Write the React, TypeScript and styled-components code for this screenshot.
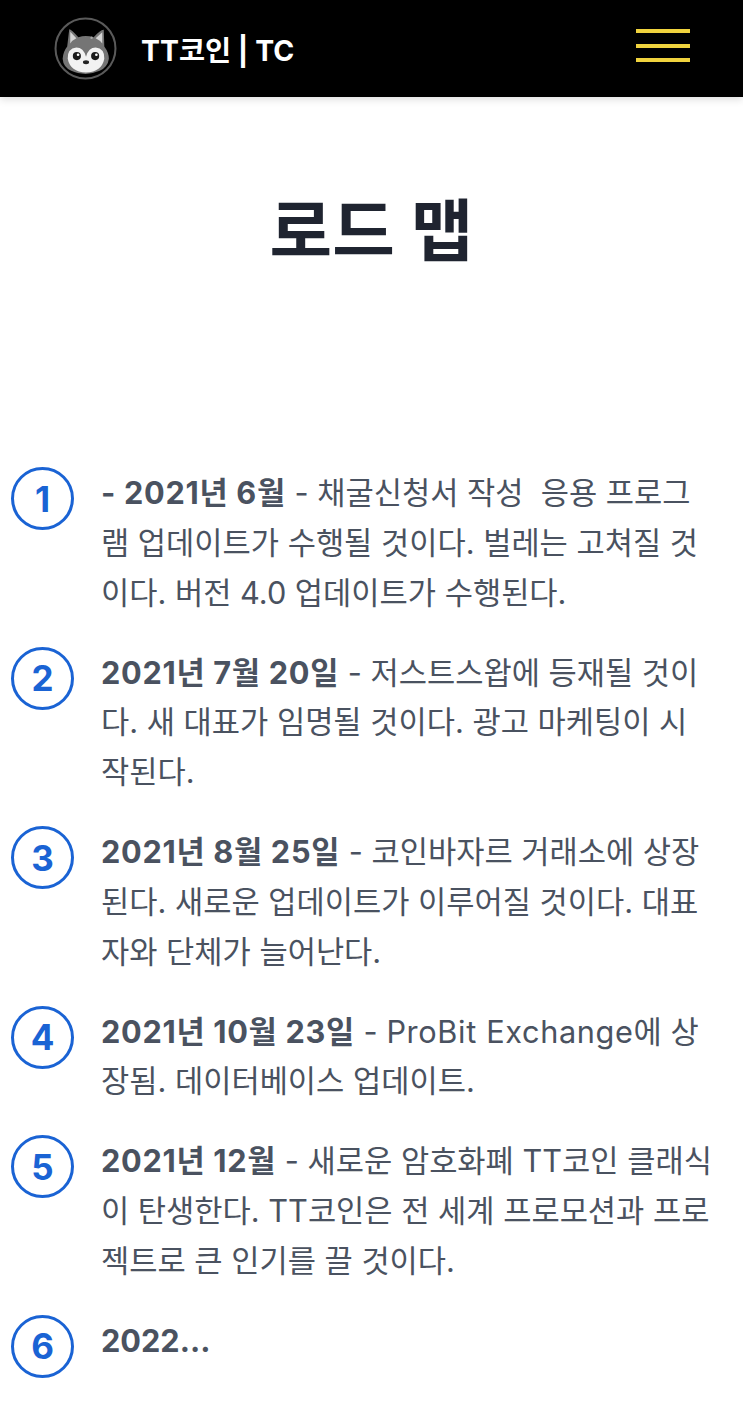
import React from "react";
import styled, { createGlobalStyle } from "styled-components";

const Global = createGlobalStyle`
  html, body {
    margin: 0;
    padding: 0;
    background: #fff;
    font-family: Inter, "Noto Sans CJK KR", sans-serif;
  }
`;

const Page = styled.div`
  width: 743px;
  height: 1415px;
  overflow: hidden;
  background: #fff;
`;

const Header = styled.header`
  height: 97px;
  background: #000;
  display: flex;
  align-items: center;
  justify-content: space-between;
  padding: 0 53px 0 54px;
  box-shadow: 0 2px 8px rgba(0, 0, 0, 0.15);
`;

const Brand = styled.div`
  display: flex;
  align-items: center;
  gap: 24px;
`;

const BrandName = styled.span`
  color: #fff;
  font-size: 28.4px;
  font-weight: 700;
  line-height: 40px;
  white-space: nowrap;
  margin-top: 5px;
`;

const Burger = styled.div`
  width: 54px;
  display: flex;
  flex-direction: column;
  gap: 10.5px;
  margin-bottom: 6px;
`;

const BurgerBar = styled.span`
  display: block;
  height: 4px;
  background: #f0d33e;
`;

const Title = styled.h1`
  margin: 0;
  padding-top: 95px;
  text-align: center;
  color: #1f2430;
  font-size: 68px;
  line-height: 78px;
  font-weight: 700;
`;

const List = styled.ol`
  list-style: none;
  margin: 0;
  padding: 198px 0 0 11px;
  display: flex;
  flex-direction: column;
  gap: 30px;
`;

const Item = styled.li`
  display: flex;
  align-items: flex-start;
  gap: 28px;
`;

const Badge = styled.span`
  flex: none;
  box-sizing: border-box;
  width: 63px;
  height: 63px;
  margin-top: -1px;
  border: 3px solid #1a63d4;
  border-radius: 50%;
  color: #1a63d4;
  font-size: 35px;
  font-weight: 700;
  display: flex;
  align-items: center;
  justify-content: center;
`;

const Body = styled.div`
  color: #4a5260;
  font-size: 30.7px;
  line-height: 49.85px;
  margin-left: -1px;
`;

const Line = styled.span`
  display: block;
  white-space: nowrap;
`;

const Strong = styled.strong<{ $tight?: boolean }>`
  font-weight: 700;
  letter-spacing: ${(props) => (props.$tight ? "0" : "0.7px")};
`;

const Latin = styled.span`
  letter-spacing: 0.65px;
`;

function Logo() {
  return (
    <svg width="63" height="63" viewBox="0 0 62 62">
      <circle cx="31" cy="31" r="29.5" fill="#000" stroke="#5a5a5a" strokeWidth="2" />
      <path d="M8.5 41 Q9 34 13 29 L15 12 Q17 12 24 20 Q31 17.5 39 20 Q46 12 49 12.5 L49.5 29 Q54 35 54 41 Q53 49 45 53 Q38 56 31 56 Q23 56 17 53 Q9 49 8.5 41 Z" fill="#757575" />
      <path d="M16 26 L16 14.5 L22 21 Q18 23 16 26 Z M47.5 26 L47.5 15 L41 21 Q45 23 47.5 26 Z" fill="#d4d4d4" />
      <path d="M31.5 39 Q29 30 22 30 Q13 31 13.5 41 Q16 54 31.5 54.5 Q47 54 49.5 41 Q50 31 41 30 Q34 30 31.5 39 Z" fill="#f2f2f2" />
      <circle cx="22.5" cy="38.5" r="4" fill="#1a1a1a" />
      <circle cx="40.5" cy="38.5" r="4" fill="#1a1a1a" />
      <circle cx="23.7" cy="37.2" r="1.3" fill="#fff" />
      <circle cx="41.7" cy="37.2" r="1.3" fill="#fff" />
      <ellipse cx="31.5" cy="44.5" rx="3" ry="1.9" fill="#222" />
      <circle cx="37" cy="20.5" r="1.2" fill="#a8a8a8" />
    </svg>
  );
}

const items: { lines: React.ReactNode[] }[] = [
  {
    lines: [
      <><Strong>- 2021년 6월</Strong> - 채굴신청서 작성&nbsp; 응용 프로그</>,
      "램 업데이트가 수행될 것이다. 벌레는 고쳐질 것",
      "이다. 버전 4.0 업데이트가 수행된다.",
    ],
  },
  {
    lines: [
      <><Strong>2021년 7월 20일</Strong> - 저스트스왑에 등재될 것이</>,
      "다. 새 대표가 임명될 것이다. 광고 마케팅이 시",
      "작된다.",
    ],
  },
  {
    lines: [
      <><Strong>2021년 8월 25일</Strong> - 코인바자르 거래소에 상장</>,
      "된다. 새로운 업데이트가 이루어질 것이다. 대표",
      "자와 단체가 늘어난다.",
    ],
  },
  {
    lines: [
      <><Strong>2021년 10월 23일</Strong> - <Latin>ProBit Exchange</Latin>에 상</>,
      "장됨. 데이터베이스 업데이트.",
    ],
  },
  {
    lines: [
      <><Strong>2021년 12월</Strong> - 새로운 암호화폐 TT코인 클래식</>,
      "이 탄생한다. TT코인은 전 세계 프로모션과 프로",
      "젝트로 큰 인기를 끌 것이다.",
    ],
  },
  { lines: [<Strong $tight>2022...</Strong>] },
];

export default function App() {
  return (
    <Page>
      <Global />
      <Header>
        <Brand>
          <Logo />
          <BrandName>TT코인 | TC</BrandName>
        </Brand>
        <Burger>
          <BurgerBar />
          <BurgerBar />
          <BurgerBar />
        </Burger>
      </Header>
      <Title>로드 맵</Title>
      <List>
        {items.map((item, i) => (
          <Item key={i}>
            <Badge>{i + 1}</Badge>
            <Body>
              {item.lines.map((line, j) => (
                <Line key={j}>{line}</Line>
              ))}
            </Body>
          </Item>
        ))}
      </List>
    </Page>
  );
}
